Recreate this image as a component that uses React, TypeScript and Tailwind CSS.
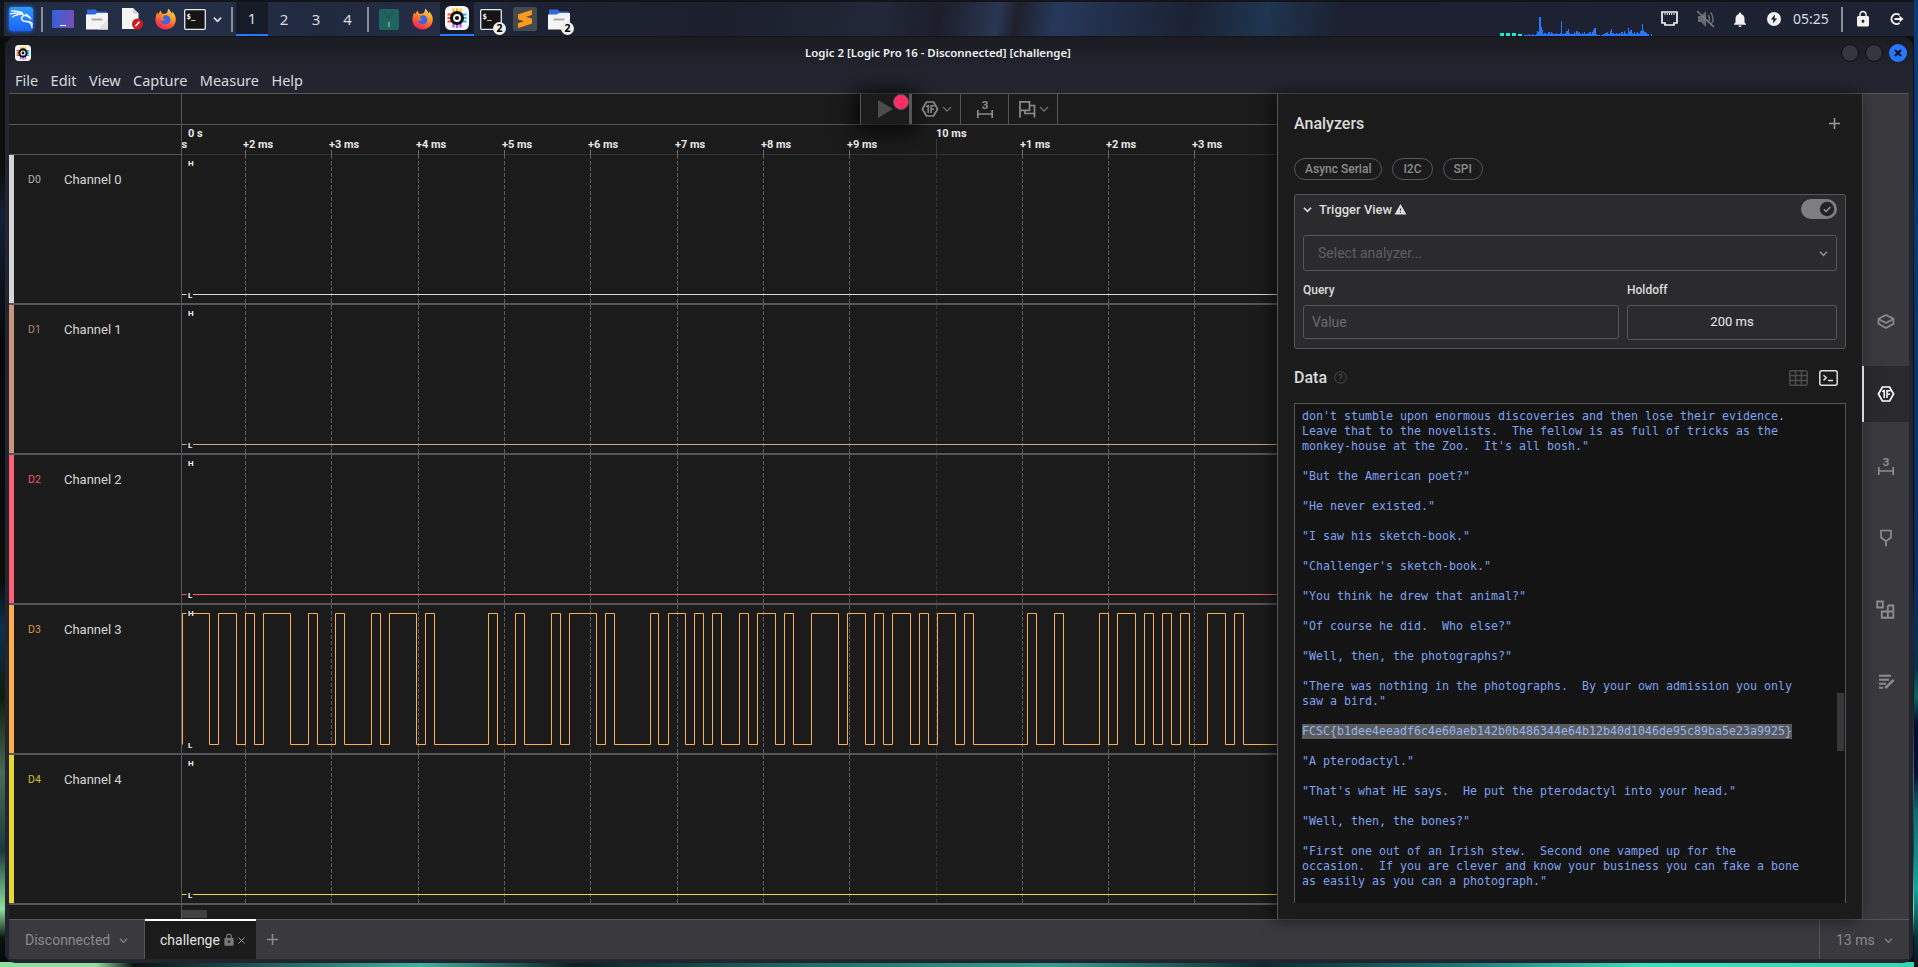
import React from "react";
import { SiKalilinux, SiSublimetext } from "react-icons/si";
import { MdLock, MdNotifications, MdWarning } from "react-icons/md";

const GRID = [245, 331, 418, 504, 590, 677, 763, 849, 936, 1022, 1108, 1194];
const PLOT_LEFT = 182;
const PLOT_WIDTH = 1095;

const EDGES = [
  209, 218, 236, 245, 254, 263, 290, 308, 317, 335, 344, 371, 380, 389, 416, 425, 434, 488, 497, 515, 524, 551, 560,
  569, 596, 605, 614, 650, 658, 668, 685, 694, 703, 712, 721, 739, 748, 757, 775, 784, 793, 811, 838, 847, 865, 874,
  883, 892, 910, 919, 928, 937, 955, 964, 973, 1027, 1036, 1054, 1063, 1099, 1108, 1117, 1135, 1144, 1153, 1162, 1171,
  1180, 1189, 1207, 1225, 1234, 1243,
];

const channels = [
  { id: "D0", name: "Channel 0", bar: "bg-[#d4d4d4]", text: "text-[#b4b4b4]", line: "#dcdcdc" },
  { id: "D1", name: "Channel 1", bar: "bg-[#c8957a]", text: "text-[#b4866c]", line: "#cfa48e" },
  { id: "D2", name: "Channel 2", bar: "bg-[#ff6078]", text: "text-[#e8566c]", line: "#ff5d6c" },
  { id: "D3", name: "Channel 3", bar: "bg-[#ffad4f]", text: "text-[#dd9845]", line: "#ffb054" },
  { id: "D4", name: "Channel 4", bar: "bg-[#e8d733]", text: "text-[#cfc02f]", line: "#eadb2f" },
];

function wavePath() {
  let d = "M0.5 139.5V8.5";
  let high = true;
  for (const e of EDGES) {
    const x = e - PLOT_LEFT + 0.5;
    high = !high;
    d += `H${x}V${high ? 8.5 : 139.5}`;
  }
  return d + `H${PLOT_WIDTH}`;
}

function Level({ y, children }: { y: number; children: string }) {
  return (
    <g>
      <rect x="4.5" y={y - 5} width="6.5" height="10" fill="#1b1b1b" />
      <text x="6" y={y + 2.9} fontSize="8" fontWeight="700" fill="#f2f2f2" fontFamily="Roboto, sans-serif">
        {children}
      </text>
    </g>
  );
}

function Plot({ color, wave }: { color: string; wave: boolean }) {
  return (
    <svg width={PLOT_WIDTH} height="148" viewBox={`0 0 ${PLOT_WIDTH} 148`} className="block shrink-0">
      {GRID.map((x) => (
        <path
          key={x}
          d={`M${x - PLOT_LEFT + 0.5} 0V148`}
          stroke={x === 936 ? "#39393c" : "#5e5e61"}
          strokeDasharray="4 2"
        />
      ))}
      <path d={wave ? wavePath() : `M0 139.5H${PLOT_WIDTH}`} fill="none" stroke={color} />
      <Level y={8.5}>H</Level>
      <Level y={140.5}>L</Level>
    </svg>
  );
}

function Chevron({ w = 9, className = "", sw = 1.3 }: { w?: number; className?: string; sw?: number }) {
  return (
    <svg width={w} height={w} viewBox="0 0 10 10" fill="none" stroke="currentColor" strokeWidth={sw} className={className}>
      <path d="M1 3l4 4 4-4" />
    </svg>
  );
}

function HexIcon({ size = 18 }: { size?: number }) {
  return (
    <svg width={size} height={size} viewBox="0 0 18 18" fill="none" stroke="currentColor" strokeWidth="1.7">
      <path d="M5.4 2h7.2L16.6 9l-4 7H5.4L1.4 9z" />
      <path d="M5 6.6L7.2 5.6V13M10 13V5.8H13.6M10 9.3H13" strokeWidth="1.5" />
    </svg>
  );
}

function MeasureIcon() {
  return (
    <svg width="20" height="20" viewBox="0 0 20 20">
      <text x="10" y="9.5" fontSize="11.5" fontWeight="700" textAnchor="middle" fill="currentColor" fontFamily="Roboto, sans-serif">
        3
      </text>
      <path d="M2.8 11v8M17.2 11v8M2 15h16" stroke="currentColor" strokeWidth="1.7" />
    </svg>
  );
}

function FlagsIcon() {
  return (
    <svg width="18" height="18" viewBox="0 0 18 18" fill="none" stroke="currentColor" strokeWidth="1.7">
      <path d="M2 17.5V1.8h9.500v8.500H2" />
      <path d="M7 10.300V13.500H16.500M11.500 5.500H16.500V17.500" />
    </svg>
  );
}

function LogicIcon({ size }: { size: number }) {
  return (
    <svg width={size} height={size} viewBox="0 0 24 24">
      <rect x="0" y="0" width="24" height="24" rx="5.5" fill="#f6f6f8" />
      <path d="M8.5 2.5v5M15.5 2.5v5" stroke="#ffc400" strokeWidth="2.2" />
      <path d="M12 2.5v5" stroke="#ffae00" strokeWidth="2" />
      <path d="M8.5 17v4.500M12 17v5M15.5 17v4.500" stroke="#b05cff" strokeWidth="2.2" />
      <path d="M2.500 8.500h5M2.500 12h5M2.500 15.500h5" stroke="#ff4b3a" strokeWidth="2.2" />
      <path d="M16.500 8.500h5M16.500 12h5M16.500 15.500h5" stroke="#28b4ff" strokeWidth="2.200" />
      <circle cx="12" cy="12" r="7" fill="#111" />
      <circle cx="12" cy="12" r="3" fill="none" stroke="#fff" strokeWidth="1.8" />
    </svg>
  );
}

function Firefox({ id }: { id: string }) {
  return (
    <svg width="21" height="22" viewBox="0 0 21 22">
      <defs>
        <linearGradient id={id} x1="0.8" y1="0" x2="0.3" y2="1">
          <stop offset="0" stopColor="#ffe14a" />
          <stop offset="0.45" stopColor="#ff8a26" />
          <stop offset="0.8" stopColor="#ff3f45" />
          <stop offset="1" stopColor="#e8206c" />
        </linearGradient>
      </defs>
      <path
        d="M13 .8c2.300 1.400 3 3 3.200 4.600.5-.4.8-1.100.7-1.900 2.300 1.900 3.900 4.700 3.900 8 0 5.800-4.600 10-10.300 10S.4 17.300.4 11.500c0-3 .9-5.300 2-7.300.1.9.4 1.500.9 2C4 4.500 5 3.300 6 2.600c0 1.300.3 2.200 1.300 3.100 1.500 0 3.500.2 4.500-.7.9-1 1.300-2.600 1.200-4.200z"
        fill={`url(#${id})`}
      />
      <path d="M10 7.300c2.800-.6 5.400 1.300 5.400 4.400 0 2.800-2.200 4.700-4.900 4.700-2.600 0-4.700-1.700-4.900-4.100 1.500.9 3 .8 4.200-.2 1-.8.3-1.200-1.600-1.400-.7-1 .4-2.800 1.800-3.400z" fill="#3a66e6" />
    </svg>
  );
}

function Folder() {
  return (
    <svg width="22" height="21" viewBox="0 0 22 21">
      <path d="M1 8V1.500Q1 .5 2 .5h7.500l2 2H20q1 0 1 1V8z" fill="#2f6ae0" />
      <path d="M0 5.500h9l2-1.500h11v16.500H0z" fill="#f4f4f4" />
      <path d="M22 10L12 20.500H22z" fill="#e2e2e2" />
      <path d="M6.500 10.500h9" stroke="#a9a9a9" strokeWidth="2" strokeLinecap="round" />
    </svg>
  );
}

function Terminal() {
  return (
    <svg width="22" height="21" viewBox="0 0 22 21">
      <rect x=".7" y=".7" width="20.600" height="19.600" rx="1" fill="#141414" stroke="#e8e8e8" strokeWidth="1.3" />
      <text x="2.500" y="9.500" fontSize="7.500" fontWeight="700" fill="#fff" fontFamily="DejaVu Sans Mono, monospace">
        $_
      </text>
    </svg>
  );
}

function Badge() {
  return (
    <span className="absolute -bottom-[5px] -right-[4px] flex h-[13px] w-[13px] items-center justify-center rounded-full bg-[#eeeeea] font-['Noto_Sans',sans-serif] text-[10.500px] font-bold leading-none text-black">
      2
    </span>
  );
}

const Sep = ({ className }: { className: string }) => <span className={`h-[25px] w-[2px] shrink-0 bg-[#8a8e98] ${className}`} />;

const BARS = [
  1, 1, 1, 1, 2, 1, 2, 1, 1, 2, 5, 4, 19, 9, 6, 2, 3, 2, 2, 4, 2, 4, 3, 2, 2, 3, 2, 2, 3, 15, 2, 2, 3, 5, 7, 3, 2, 2,
  2, 4, 2, 5, 3, 4, 2, 3, 2, 4, 2, 3, 2, 4, 2, 4, 6, 8, 2, 1, 1, 0, 1, 1, 2, 3, 3, 4, 2, 5, 7, 3, 2, 2, 3, 2, 3, 2, 4,
  2, 5, 3, 2, 8, 4, 6, 3, 2, 4, 2, 4, 3, 2, 5, 12, 6, 4, 3, 2, 2, 0, 2,
];

function TopPanel() {
  return (
    <header className="ml-[4px] mt-[2px] flex h-[34px] shrink-0 items-center overflow-hidden bg-[linear-gradient(100deg,#202a40_0%,#253048_9%,#20293e_17%,#252e45_24%,#1d2232_28%,#1c202d_38%,#222838_46%,#1c1e2a_49%,#2a3653_52%,#20202c_53%,#26385a_55%,#1b2233_62%,#1f3550_66%,#1c2030_70%,#1e2334_100%)] font-['Noto_Sans',sans-serif] text-[15px] text-[#d9dce2]">
      <span className="ml-[5px] flex h-[24px] w-[24px] items-center justify-center rounded-[3px] bg-[linear-gradient(180deg,#2b9bff,#1c62f5)] text-[23px] text-white shadow-[0_0_4px_#2777ff]">
        <SiKalilinux stroke="#ffffff" strokeWidth="0.9" />
      </span>
      <Sep className="ml-[8px]" />
      <span className="ml-[9px] flex h-[18px] w-[22px] items-end justify-center rounded-[1px] bg-[linear-gradient(100deg,#2f62dc,#7a4fb4)] pb-[2px]">
        <span className="h-[1.500px] w-[6px] bg-white" />
      </span>
      <span className="ml-[12px]">
        <Folder />
      </span>
      <svg width="21" height="22" viewBox="0 0 21 22" className="ml-[14px]">
        <path d="M0 0h11l5.500 5.500V21H0z" fill="#f4f4f4" />
        <path d="M11 0v5.500h5.500z" fill="#cfcfcf" />
        <circle cx="15.500" cy="16" r="5.500" fill="#cc1b20" />
        <path d="M13.300 18.200l4.200-4.400" stroke="#fff" strokeWidth="1.600" />
      </svg>
      <span className="ml-[12px]">
        <Firefox id="ffa" />
      </span>
      <span className="ml-[8px]">
        <Terminal />
      </span>
      <Chevron w={9} sw={2} className="ml-[7px]" />
      <Sep className="ml-[9px]" />
      <div className="ml-[3px] flex h-full">
        <span className="flex w-[32px] items-center justify-center border-b-2 border-[#2777ff] bg-[#161b28]">1</span>
        <span className="flex w-[32px] items-center justify-center">2</span>
        <span className="flex w-[32px] items-center justify-center">3</span>
        <span className="flex w-[31px] items-center justify-center">4</span>
      </div>
      <Sep className="ml-[4px]" />
      <svg width="20" height="21" viewBox="0 0 20 21" className="ml-[10px]">
        <rect width="20" height="21" rx="2" fill="#1e6560" />
        <path d="M6 2l4 7 4-7M10 9v5" stroke="#2f4f4d" fill="none" strokeWidth="1.200" />
        <path d="M10 12.500v5.500" stroke="#7d9694" strokeWidth="1.800" />
      </svg>
      <span className="ml-[13px]">
        <Firefox id="ffb" />
      </span>
      <span className="ml-[7px] flex h-full w-[34px] items-center justify-center border-b-2 border-[#2777ff] bg-[#161b28]">
        <LogicIcon size={24} />
      </span>
      <span className="relative ml-[6px]">
        <Terminal />
        <Badge />
      </span>
      <span className="ml-[11px] flex h-[24px] w-[24px] items-center justify-center rounded-[2px] bg-[#46494d] text-[18px] text-[#ff9a1f]">
        <SiSublimetext />
      </span>
      <span className="relative ml-[11px]">
        <Folder />
        <Badge />
      </span>
      <svg width="153" height="34" viewBox="0 0 153 34" className="ml-auto block" shapeRendering="crispEdges">
        {[0, 6, 12, 18].map((x, i) => (
          <rect key={x} x={x} y={i === 3 ? 32 : 31} width="4" height={i === 3 ? 2 : 3} fill="#12efd0" />
        ))}
        {BARS.map((h, i) => (
          <rect key={i} x={24 + i * 1.28} y={34 - h} width="1.28" height={h} fill="#2777ff" />
        ))}
      </svg>
      <svg width="17" height="16" viewBox="0 0 17 16" className="ml-[8px]" fill="none" stroke="#f1f1f1" strokeWidth="1.700">
        <path d="M1 1h15v11h-3v2H4v-2H1z" />
        <path d="M4 2v2M6.300 2v2M8.500 2v2M10.700 2v2M13 2v2" strokeWidth="1" />
      </svg>
      <svg width="18" height="18" viewBox="0 0 18 18" className="ml-[19px]" fill="#666a72">
        <path d="M1 6h3l5-5v16l-5-5H1z" />
        <path d="M11 5q3 4 0 8M13.500 2.500q5 6.500 0 13" fill="none" stroke="#666a72" strokeWidth="1.500" />
        <path d="M0 1l17 16" stroke="#7a7e86" strokeWidth="1.600" />
      </svg>
      <span className="ml-[16px] flex w-[18px] justify-center text-[19px] text-[#f1f1f1]">
        <MdNotifications />
      </span>
      <svg width="14" height="14" viewBox="0 0 14 14" className="ml-[18px]">
        <circle cx="7" cy="7" r="7" fill="#f1f1f1" />
        <path d="M8 2.500L3.800 7.600h2.500L5.800 11.500 10.200 6.400H7.600z" fill="#1d2130" />
      </svg>
      <span className="ml-[12px] w-[37px] text-[14px] leading-none">05:25</span>
      <Sep className="ml-[11px]" />
      <span className="ml-[11px] flex w-[18px] justify-center text-[18px] text-[#f1f1f1]">
        <MdLock />
      </span>
      <svg width="15" height="14" viewBox="0 0 15 14" className="ml-[17px] mr-[10px]" fill="none" stroke="#f1f1f1" strokeWidth="2">
        <path d="M10.500 3A5 5 0 1 0 10.500 11M5.500 7H13" />
        <path d="M10.500 3.500L14.500 7l-4 3.500z" fill="#f1f1f1" stroke="none" />
      </svg>
    </header>
  );
}

function TitleBar() {
  return (
    <div className="flex h-[32px] shrink-0 items-center pl-[6px] pr-[2px]">
      <span className="flex w-[20px]">
        <LogicIcon size={16} />
      </span>
      <span className="flex-1 text-center font-['Noto_Sans',sans-serif] text-[11.420px] font-semibold text-[#f0f0f0]">
        Logic 2 [Logic Pro 16 - Disconnected] [challenge]
      </span>
      <span className="flex w-[66px] justify-end gap-[6px]">
        <span className="h-[18px] w-[18px] shrink-0 rounded-full border border-[#0c0d10] bg-[#33353f]" />
        <span className="h-[18px] w-[18px] shrink-0 rounded-full border border-[#0c0d10] bg-[#33353f]" />
        <svg width="18" height="18" viewBox="0 0 18 18" className="shrink-0">
          <circle cx="9" cy="9" r="9" fill="#2777ff" />
          <path d="M6 6l6 6M12 6l-6 6" stroke="#101622" strokeWidth="2.300" />
        </svg>
      </span>
    </div>
  );
}

function Toolbar() {
  return (
    <div className="flex h-[31px] shrink-0 border-b border-[#55555a]">
      <div className="w-[173px] shrink-0 border-r border-[#55555a]" />
      <div className="flex h-[30px] pl-[678px] text-[#8b8b8b]">
        <div className="relative flex w-[52px] items-center border-l border-r-[3px] border-[#55555a] bg-[#1b1b1b] pl-[17px] shadow-[0_2px_22px_6px_rgba(0,0,0,0.75)]">
          <svg width="15" height="18" viewBox="0 0 15 18">
            <path d="M0 0l15 9-15 9z" fill="#4c4c4c" />
          </svg>
          <span className="absolute right-0 top-0 h-[16px] w-[16px] rounded-full border-[1.500px] border-[#55555a] bg-[#ff2d66]" />
        </div>
        <div className="relative flex w-[49px] items-center gap-[3px] border-r border-[#55555a] bg-[linear-gradient(90deg,#141414,#1b1b1b_40%)] pl-[9px]">
          <HexIcon />
          <Chevron w={10} className="text-[#6f6f6f]" />
        </div>
        <div className="relative flex w-[48px] items-center justify-center border-r border-[#55555a] bg-[#1b1b1b]">
          <MeasureIcon />
        </div>
        <div className="relative flex w-[49px] items-center gap-[3px] border-r border-[#55555a] pl-[9px]">
          <FlagsIcon />
          <Chevron w={10} className="text-[#6f6f6f]" />
        </div>
      </div>
    </div>
  );
}

function Ruler() {
  const minor = ["+2 ms", "+3 ms", "+4 ms", "+5 ms", "+6 ms", "+7 ms", "+8 ms", "+9 ms", "", "+1 ms", "+2 ms", "+3 ms"];
  return (
    <div className="flex h-[30px] shrink-0">
      <div className="w-[173px] shrink-0 border-b border-r border-[#55555a]" />
      <svg width={PLOT_WIDTH} height="30" viewBox={`0 0 ${PLOT_WIDTH} 30`} className="relative block" fontFamily="Roboto, sans-serif" fontSize="11" fontWeight="700" fill="#e6e6e6">
        <path d={`M0 29.500H${PLOT_WIDTH}`} stroke="#343438" />
        {GRID.map((x, i) => (
          <path key={i} d={`M${x - PLOT_LEFT + 0.5} ${x === 936 ? 14 : 25}V30`} stroke={x === 936 ? "#39393c" : "#6a6a6d"} />
        ))}
        <text x="6" y="11.500">0 s</text>
        <text x="754" y="11.500">10 ms</text>
        <text x="-0.500" y="23">s</text>
        {GRID.map((x, i) => (
          <text key={i} x={x - PLOT_LEFT - 2} y="23">
            {minor[i]}
          </text>
        ))}
      </svg>
    </div>
  );
}

const DATA = `don't stumble upon enormous discoveries and then lose their evidence.
Leave that to the novelists.  The fellow is as full of tricks as the
monkey-house at the Zoo.  It's all bosh."

"But the American poet?"

"He never existed."

"I saw his sketch-book."

"Challenger's sketch-book."

"You think he drew that animal?"

"Of course he did.  Who else?"

"Well, then, the photographs?"

"There was nothing in the photographs.  By your own admission you only
saw a bird."
`;
const FLAG = "FCSC{b1dee4eeadf6c4e60aeb142b0b486344e64b12b40d1046de95c89ba5e23a9925}";
const DATA_END = `
"A pterodactyl."

"That's what HE says.  He put the pterodactyl into your head."

"Well, then, the bones?"

"First one out of an Irish stew.  Second one vamped up for the
occasion.  If you are clever and know your business you can fake a bone
as easily as you can a photograph."`;

function AnalyzerPanel() {
  return (
    <aside className="relative flex w-[585px] shrink-0 flex-col border-l border-[#55555a] bg-[#1b1b1b] pl-[16px] pr-[15px] text-[#dcdcdc] shadow-[-4px_0_16px_rgba(0,0,0,0.6)]">
      <div className="flex h-[60px] items-center justify-between pr-[7px]">
        <h2 className="text-[16px] font-medium">Analyzers</h2>
        <svg width="11" height="11" viewBox="0 0 11 11" stroke="#9a9a9a" strokeWidth="1.500" className="mb-[2px]">
          <path d="M5.500 0v11M0 5.500h11" />
        </svg>
      </div>
      <div className="mt-[4px] flex gap-[10px] text-[12px] font-medium text-[#8c8c8c]">
        {["Async Serial", "I2C", "SPI"].map((p) => (
          <span key={p} className="flex h-[22px] items-center rounded-full border border-[#55555a] px-[10px]">
            {p}
          </span>
        ))}
      </div>
      <section className="mt-[14px] h-[155px] w-[552px] rounded-[3px] border border-[#55555a] bg-[#2b2b2d] px-[8px]">
        <div className="flex h-[31px] items-center pb-[2px]">
          <Chevron w={9} sw={1.800} />
          <span className="ml-[7px] text-[13px] font-medium">Trigger View</span>
          <MdWarning className="ml-[2px] text-[13px]" />
          <svg width="36" height="20" viewBox="0 0 36 20" className="ml-auto mb-[1px]">
            <rect width="36" height="20" rx="10" fill="#7e7e80" />
            <circle cx="26" cy="10" r="7.200" fill="#232325" />
            <path d="M22.800 10.200l2.300 2.300 4.300-4.600" fill="none" stroke="#9a9a9a" strokeWidth="1.500" />
          </svg>
        </div>
        <div className="mt-[9px] flex h-[36px] items-center justify-between rounded-[3px] border border-[#55555a] pl-[14px] pr-[8px] text-[14px] text-[#5f5f61]">
          Select analyzer...
          <Chevron w={9} sw={1.800} className="text-[#8c8c8c]" />
        </div>
        <div className="mt-[11px] flex gap-[8px] text-[12px] font-medium">
          <label className="w-[316px] leading-[16px]">Query</label>
          <label className="leading-[16px]">Holdoff</label>
        </div>
        <div className="mt-[7px] flex items-start gap-[8px]">
          <div className="flex h-[34px] w-[316px] items-center rounded-[3px] border border-[#55555a] pl-[8px] text-[14px] text-[#6a6a6c]">Value</div>
          <div className="flex h-[35px] flex-1 items-center justify-center rounded-[3px] border border-[#55555a] pb-[1px] text-[13px] text-[#ececec]">200 ms</div>
        </div>
      </section>
      <div className="flex h-[54px] items-center pr-[9px] pt-[3px]">
        <h2 className="text-[16px] font-medium">Data</h2>
        <svg width="13" height="13" viewBox="0 0 13 13" className="ml-[7px]">
          <circle cx="6.500" cy="6.500" r="5.800" fill="none" stroke="#4a4a4c" />
          <text x="6.500" y="9.600" fontSize="9" textAnchor="middle" fill="#5a5a5c">?</text>
        </svg>
        <svg width="19" height="16" viewBox="0 0 19 16" className="ml-auto" fill="none" stroke="#4c4c4e" strokeWidth="1.500">
          <rect x=".8" y=".8" width="17.400" height="14.400" rx="1.500" />
          <path d="M1 5.600h17M1 10.400h17M6.600 1v14M12.400 1v14" />
        </svg>
        <svg width="19" height="16" viewBox="0 0 19 16" className="ml-[11px]" fill="none" stroke="#dedede" strokeWidth="1.500">
          <rect x=".8" y=".8" width="17.400" height="14.400" rx="2" />
          <path d="M4.500 5.200L7.300 7.800 4.500 10.400M9 10.600h5" />
        </svg>
      </div>
      <div className="relative h-[500px] w-[552px] border border-b-0 border-[#55555a] bg-[#141414] pl-[7px] pt-[5px]">
        <pre className="font-['DejaVu_Sans_Mono',monospace] text-[11.630px] leading-[15px] text-[#7fa2ee]">
          {DATA}
          {"\n"}
          <span className="inline-block h-[15px] bg-[#5a5a5a] align-top text-[#94b4f4]">{FLAG}</span>
          {"\n"}
          {DATA_END}
        </pre>
        <span className="absolute right-[1px] top-[289px] h-[58px] w-[7px] bg-[#38383a]" />
      </div>
    </aside>
  );
}

function SideRail() {
  return (
    <nav className="flex w-[47px] shrink-0 flex-col items-center border-l border-[#55555a] bg-[#3a393e] pt-[200px] text-[#8d8d90]">
      <span className="flex h-[56px] items-center pb-[2px]">
        <svg width="18" height="15" viewBox="0 0 18 15" fill="none" stroke="currentColor" strokeWidth="1.700" strokeLinejoin="round">
          <path d="M9 1l7.500 3.800v5L9 14 1.500 9.800v-5z" />
          <path d="M1.500 5L9 9l7.500-4" />
        </svg>
      </span>
      <span className="-ml-[1px] mt-[16px] flex h-[56px] w-[47px] items-center justify-center border-l-2 border-white bg-[#2a2a2c] pr-[2px] text-white">
        <HexIcon />
      </span>
      <span className="mt-[16px] flex h-[56px] items-center">
        <MeasureIcon />
      </span>
      <span className="mt-[16px] flex h-[56px] items-center">
        <svg width="14" height="18" viewBox="0 0 14 18" fill="none" stroke="currentColor" strokeWidth="1.700">
          <path d="M2 1.500h10v7L7 12.200 2 8.500zM7 12v5.500" />
        </svg>
      </span>
      <span className="mt-[16px] flex h-[56px] items-center pb-[2px] pr-[2px]">
        <svg width="19" height="19" viewBox="0 0 19 19" fill="none" stroke="currentColor" strokeWidth="1.900">
          <path d="M1.200 1.500H6.800V7.500H1.200zM12 5.500h5.300v12.300H5.800v-6.300H17.300M11.800 5.500v12.300" />
        </svg>
      </span>
      <span className="mt-[16px] flex h-[56px] items-center">
        <svg width="18" height="16" viewBox="0 0 18 16" fill="none" stroke="currentColor" strokeWidth="1.900">
          <path d="M2 1.800h12M2 5.800h10M2 9.800h7M2 13.800h4" />
          <path d="M8.300 14.200l8.300-8.300" strokeWidth="2.500" />
        </svg>
      </span>
    </nav>
  );
}

function BottomBar() {
  return (
    <footer className="flex h-[40px] shrink-0 border-t border-[#55555a] bg-[#3a393e] text-[14px] text-[#8b8b8b]">
      <div className="flex w-[136px] items-center border-r border-[#55555a] pl-[16px] pt-[1px]">
        Disconnected
        <Chevron w={9} className="ml-[9px]" />
      </div>
      <div className="-mt-px flex w-[111px] items-center border-t-2 border-white bg-[#1b1b1b] pl-[15px] text-[#e2e2e2]">
        challenge
        <MdLock className="ml-[2px] text-[14px] text-[#77777c]" />
        <svg width="7" height="7" viewBox="0 0 7 7" stroke="#9b9b9b" className="ml-[2px]">
          <path d="M.5.5l6 6M6.500.5l-6 6" />
        </svg>
      </div>
      <svg width="11" height="11" viewBox="0 0 11 11" stroke="#8b8b8b" strokeWidth="1.500" className="ml-[11px] self-center">
        <path d="M5.500 0v11M0 5.500h11" />
      </svg>
      <div className="ml-auto flex w-[90px] items-center border-l border-[#55555a] pl-[16px] pt-[1px]">
        13 ms
        <Chevron w={9} className="ml-[9px]" />
      </div>
    </footer>
  );
}

export default function App() {
  return (
    <div className="flex h-[967px] w-[1918px] overflow-hidden bg-[linear-gradient(180deg,#0b0d0c_0%,#0c0f0a_18%,#142038_22%,#08090a_35%,#0a0c0a_60%,#0e3050_65%,#0d1c0a_72%,#4a6a58_80%,#1c3a3c_88%,#8fe0a0_94%,#0c1210_97%,#05080a_100%)]">
      <div className="flex w-[1914px] shrink-0 flex-col bg-[linear-gradient(90deg,#8fe0a0_0,#8fe0a0_5%,#0a1412_7%,#1f5c60_14%,#3fb3a0_22%,#0b2022_30%,#1c6c6a_42%,#35a090_55%,#0c2a30_66%,#1a7474_76%,#3fe0c0_86%,#35d4b4_100%)] bg-[length:100%_5px] bg-bottom bg-no-repeat font-[Roboto,sans-serif]">
        <div className="flex h-[37px] shrink-0 flex-col bg-[#12141a]">
          <TopPanel />
        </div>
        <main className="ml-[5px] flex h-[926px] w-[1908px] flex-col rounded-[10px] bg-[linear-gradient(180deg,#1b1c22_0px,#22252f_34px)] px-[4px] pb-[4px]">
          <TitleBar />
          <div className="flex h-[24px] shrink-0 items-center gap-[12.400px] pb-[2px] pl-[6px] font-['Noto_Sans',sans-serif] text-[14.500px] leading-[20px] text-[#d8dade]">
            {["File", "Edit", "View", "Capture", "Measure", "Help"].map((m) => (
              <span key={m}>{m}</span>
            ))}
          </div>
          <div className="flex h-[826px] shrink-0 border-t border-[#55555a]">
            <div className="flex w-[1268px] shrink-0 flex-col bg-[#1b1b1b]">
              <Toolbar />
              <Ruler />
              {channels.map((c, i) => (
                <div key={c.id} className="flex h-[150px] shrink-0 border-b-2 border-[#55555a]">
                  <div className="flex w-[173px] shrink-0 border-r border-[#55555a]">
                    <span className={`w-[5px] ${c.bar}`} />
                    <span className={`ml-[14px] mt-[17px] w-[36px] text-[10.500px] leading-[16px] ${c.text}`}>{c.id}</span>
                    <span className="mt-[17px] text-[13px] leading-[16px] text-[#d6d6d6]">{c.name}</span>
                  </div>
                  <Plot color={c.line} wave={i === 3} />
                </div>
              ))}
              <div className="flex flex-1">
                <div className="w-[173px] shrink-0 border-r border-[#55555a]" />
                <span className="mt-[5px] h-[8px] w-[25px] bg-[#414141]" />
              </div>
            </div>
            <AnalyzerPanel />
            <SideRail />
          </div>
          <BottomBar />
        </main>
      </div>
      <div className="w-[4px] shrink-0 bg-[linear-gradient(180deg,#0a3c7c_0%,#083468_40%,#0a2c60_60%,#06304c_69%,#0a6468_72%,#060a30_75%,#04103a_80%,#0c6c78_84%,#12a4a0_92%,#04343a_97%,#04161c_100%)]" />
    </div>
  );
}
